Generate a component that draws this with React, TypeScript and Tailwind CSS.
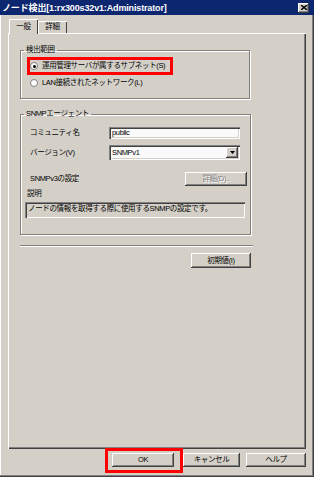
const raised =
    'bg-[#d4d0c8] shadow-[inset_-1px_-1px_0_#404040,inset_1px_1px_0_#ffffff,inset_-2px_-2px_0_#808080]';
const sunken =
    'shadow-[inset_1px_1px_0_#808080,inset_2px_2px_0_#404040,inset_-1px_-1px_0_#ffffff,inset_-2px_-2px_0_#d4d0c8]';
const etched = 'border border-[#808080] shadow-[inset_1px_1px_0_#ffffff,1px_1px_0_#ffffff]';

function Radio({ checked }: { checked?: boolean }) {
    return (
        <span className="relative flex h-[8px] w-[8px] shrink-0 items-center justify-center rounded-full border border-[#808080] bg-white">
            {checked && <span className="h-[3px] w-[3px] rounded-full bg-black" />}
        </span>
    );
}

function Btn({ label, className = '', disabled }: { label: string; className?: string; disabled?: boolean }) {
    return (
        <div className={`flex items-center justify-center ${raised} ${className}`}>
            <span className={disabled ? 'text-[#808080] [text-shadow:1px_1px_0_#ffffff]' : 'text-black'}>{label}</span>
        </div>
    );
}

export default function App() {
    return (
        <div
            className="flex h-[477px] w-[314px] flex-col whitespace-nowrap bg-[#d4d0c8] text-[7.5px] leading-[10px] tracking-[-0.35px] text-black shadow-[inset_-1px_-1px_0_#404040,inset_-2px_-2px_0_#808080,inset_1px_0_0_#ffffff]"
            style={{ fontFamily: "'Liberation Sans', 'Noto Sans CJK JP', sans-serif" }}
        >
            {/* Title bar */}
            <div className="flex h-[15px] items-center justify-between bg-[#0c2770] pl-[2px] pr-[5px]">
                <span className="text-[9px] font-bold tracking-[-0.15px] text-white">ノード検出[1:rx300s32v1:Administrator]</span>
                <div className={`flex h-[10px] w-[11px] items-center justify-center ${raised}`}>
                    <svg width="6" height="5" viewBox="0 0 6 5">
                        <path d="M0 0 L6 5 M6 0 L0 5" stroke="#000" strokeWidth="1.4" />
                    </svg>
                </div>
            </div>

            {/* Tabs */}
            <div className="flex h-[18px] items-end pl-[9px]">
                <div className="relative z-10 -mb-px flex h-[15px] w-[29px] items-center justify-center bg-[#d4d0c8] shadow-[inset_1px_1px_0_#ffffff,inset_-1px_0_0_#404040]">
                    一般
                </div>
                <div className="flex h-[12px] w-[29px] items-center justify-center shadow-[inset_1px_1px_0_#ffffff,inset_-1px_0_0_#404040]">
                    詳細
                </div>
            </div>

            {/* Tab panel */}
            <div className="ml-[8px] flex h-[416px] w-[298px] flex-col border-l border-t border-white shadow-[inset_-1px_-1px_0_#404040,inset_-2px_-2px_0_#808080]">
                <fieldset className={`ml-[11px] mt-[11px] w-[230px] ${etched} pb-[10px]`}>
                    <legend className="ml-[3px] px-[2px]">検出範囲</legend>
                    <div className="ml-[6px] mt-[2px] flex h-[18px] w-[146px] items-center gap-[4px] border-[3px] border-[#ff0000]">
                        <Radio checked />
                        <span>運用管理サーバが属するサブネット(S)</span>
                    </div>
                    <div className="ml-[9px] mt-[3px] flex h-[10px] items-center gap-[4px]">
                        <Radio />
                        <span>LAN接続されたネットワーク(L)</span>
                    </div>
                </fieldset>

                <fieldset className={`ml-[11px] mt-[10px] w-[231px] ${etched} pb-[16px]`}>
                    <legend className="ml-[3px] px-[2px]">SNMPエージェント</legend>
                    <div className="mt-[8px] flex h-[12px] items-center pl-[9px]">
                        <span className="w-[79px]">コミュニティ名</span>
                        <div className={`flex h-[12px] w-[131px] items-center bg-[#fafafa] pl-[3px] ${sunken}`}>public</div>
                    </div>
                    <div className="mt-[6px] flex h-[15px] items-center pl-[9px]">
                        <span className="w-[79px]">バージョン(V)</span>
                        <div className={`flex h-[15px] w-[131px] items-center justify-between bg-[#fafafa] pl-[3px] pr-[2px] ${sunken}`}>
                            <span>SNMPv1</span>
                            <div className={`flex h-[11px] w-[12px] items-center justify-center ${raised}`}>
                                <svg width="5" height="3" viewBox="0 0 5 3">
                                    <path d="M0 0 H5 L2.5 3 Z" fill="#000" />
                                </svg>
                            </div>
                        </div>
                    </div>
                    <div className="mt-[12px] flex h-[14px] items-center justify-between pl-[9px] pr-[3px]">
                        <span>SNMPv3の設定</span>
                        <Btn label="詳細(D).." disabled className="h-[14px] w-[62px]" />
                    </div>
                    <div className="ml-[6px] mt-[3px]">説明</div>
                    <div className={`ml-[4px] mt-[3px] h-[16px] w-[220px] pl-[3px] pt-[2px] ${sunken}`}>
                        ノードの情報を取得する際に使用するSNMPの設定です。
                    </div>
                </fieldset>

                <div className="ml-[11px] mt-[10px] h-[2px] w-[233px] border-t border-[#808080] border-b border-b-white" />

                <div className="ml-[182px] mt-[6px]">
                    <Btn label="初期値(I)" className="h-[15px] w-[60px]" />
                </div>
            </div>

            {/* Bottom buttons */}
            <div className="mt-[4px] flex pl-[112px]">
                <div className="relative">
                    <Btn label="OK" className="h-[14px] w-[62px]" />
                    <span className="absolute -bottom-[6px] -left-[7px] -right-[9px] -top-[5px] border-[3px] border-[#ff0000]" />
                </div>
                <Btn label="キャンセル" className="ml-[9px] h-[14px] w-[57px]" />
                <Btn label="ヘルプ" className="ml-[6px] h-[14px] w-[60px]" />
            </div>
        </div>
    );
}
